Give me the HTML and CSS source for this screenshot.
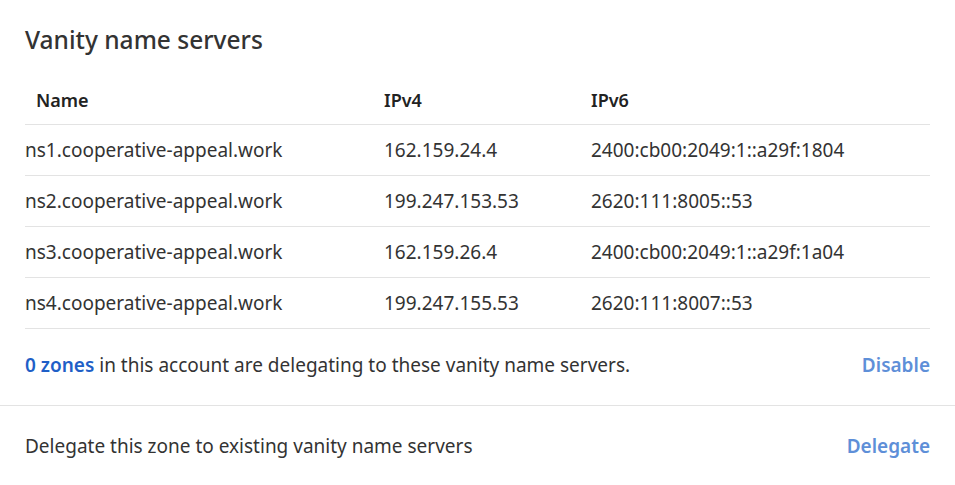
FILE: index.html
```html
<!DOCTYPE html>
<html>
<head>
<meta charset="utf-8">
<link rel="stylesheet" href="styles.css">
</head>
<body>
<div class="card">
  <section class="main">
    <h2 class="title">Vanity name servers</h2>
    <div class="table">
      <div class="row head">
        <div class="c name">Name</div>
        <div class="c">IPv4</div>
        <div class="c">IPv6</div>
      </div>
      <div class="row">
        <div class="c">ns1.cooperative-appeal.work</div>
        <div class="c">162.159.24.4</div>
        <div class="c">2400:cb00:2049:1::a29f:1804</div>
      </div>
      <div class="row">
        <div class="c">ns2.cooperative-appeal.work</div>
        <div class="c">199.247.153.53</div>
        <div class="c">2620:111:8005::53</div>
      </div>
      <div class="row">
        <div class="c">ns3.cooperative-appeal.work</div>
        <div class="c">162.159.26.4</div>
        <div class="c">2400:cb00:2049:1::a29f:1a04</div>
      </div>
      <div class="row">
        <div class="c">ns4.cooperative-appeal.work</div>
        <div class="c">199.247.155.53</div>
        <div class="c">2620:111:8007::53</div>
      </div>
    </div>
    <div class="info">
      <p><a class="zones" href="#">0 zones</a> in this account are delegating to these vanity name servers.</p>
      <a class="action" href="#">Disable</a>
    </div>
  </section>
  <section class="footer">
    <p>Delegate this zone to existing vanity name servers</p>
    <a class="action" href="#">Delegate</a>
  </section>
</div>
</body>
</html>
```
FILE: styles.css
```css
html, body {
  margin: 0;
  padding: 0;
  background: #fff;
}
body {
  font-family: "Noto Sans", "Open Sans", sans-serif;
  color: #333;
  font-size: 19px;
}
.card {
  width: 955px;
  height: 485px;
  box-sizing: border-box;
  background: #fff;
  border-radius: 0 0 6px 6px;
}
.main {
  padding: 0 25px;
}
.title {
  margin: 0;
  padding-top: 23px;
  height: 33px;
  line-height: 33px;
  font-size: 24.5px;
  font-weight: 500;
  color: #333;
}
.table {
  margin-top: 19px;
}
.row {
  display: grid;
  grid-template-columns: 359px 207px 1fr;
  height: 51px;
  align-items: center;
  border-bottom: 1px solid #e3e3e3;
  box-sizing: border-box;
}
.row.head {
  height: 50px;
  font-size: 18px;
  font-weight: 600;
  color: #222;
}
.row.head .name {
  padding-left: 11px;
}
.info {
  display: flex;
  justify-content: space-between;
  align-items: center;
  height: 76px;
  padding-bottom: 5px;
  box-sizing: border-box;
}
.info p, .footer p {
  margin: 0;
}
.zones {
  color: #1f5fc7;
  font-weight: 600;
  text-decoration: none;
}
.action {
  color: #5e8fd8;
  font-weight: 600;
  text-decoration: none;
}
.footer {
  border-top: 1px solid #e3e3e3;
  display: flex;
  justify-content: space-between;
  align-items: center;
  padding: 0 25px;
  height: 79px;
}
```
